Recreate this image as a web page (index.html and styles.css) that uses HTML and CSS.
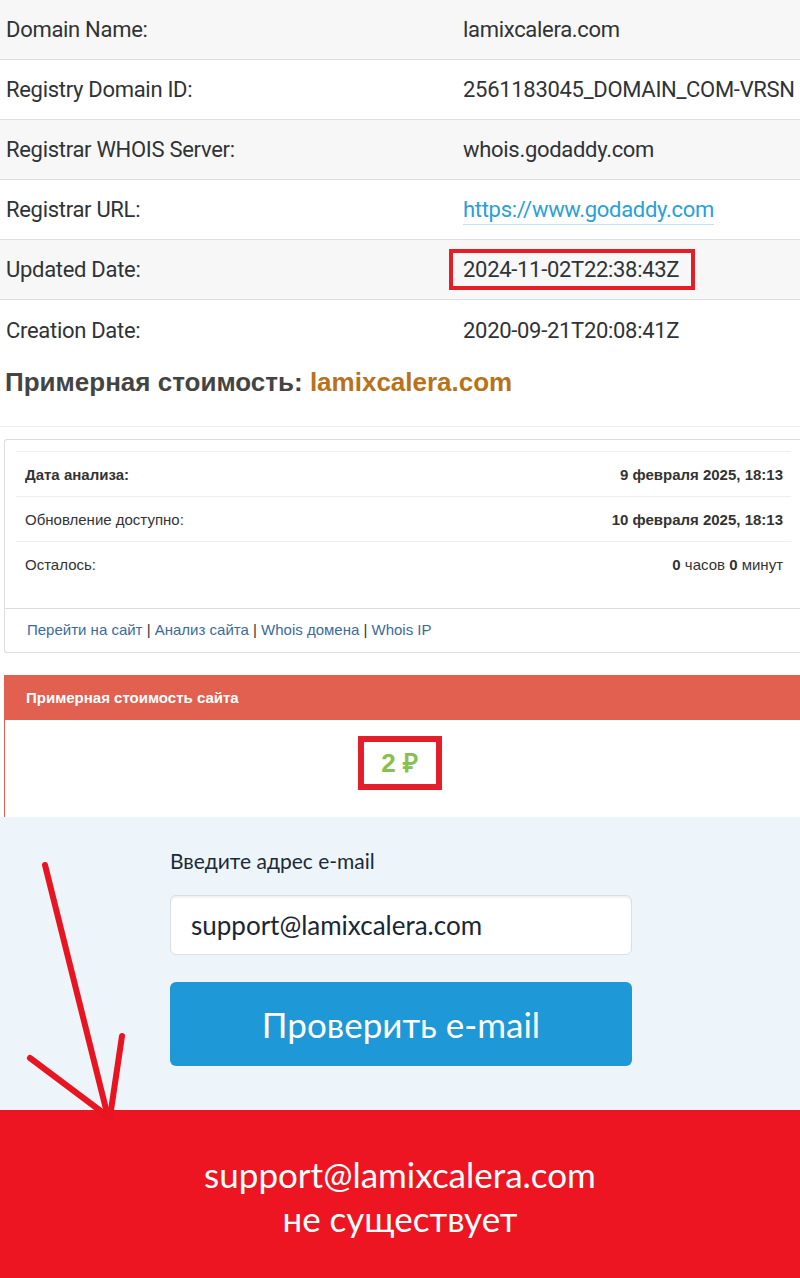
FILE: index.html
```html
<!DOCTYPE html>
<html lang="en">
<head>
    <meta charset="UTF-8">
    <meta name="viewport" content="width=device-width, initial-scale=1.0">
    <title>lamixcalera.com</title>
    <link rel="stylesheet" href="styles.css">
</head>
<body>
    <div id="whois">
        <div class="row"><span>Domain Name:</span><span>lamixcalera.com</span></div>
        <div class="row"><span>Registry Domain ID:</span><span>2561183045_DOMAIN_COM-VRSN</span></div>
        <div class="row"><span>Registrar WHOIS Server:</span><span>whois.godaddy.com</span></div>
        <div class="row"><span>Registrar URL:</span><span><a href="#">https://www.godaddy.com</a></span></div>
        <div class="row"><span>Updated Date:</span><span><span class="mark">2024-11-02T22:38:43Z</span></span></div>
        <div class="row last"><span>Creation Date:</span><span>2020-09-21T20:08:41Z</span></div>
    </div>

    <h2 class="price-title">Примерная стоимость: <span>lamixcalera.com</span></h2>

    <div class="panel">
        <table class="info">
            <tr><td><b>Дата анализа:</b></td><td><b>9 февраля 2025, 18:13</b></td></tr>
            <tr><td>Обновление доступно:</td><td><b>10 февраля 2025, 18:13</b></td></tr>
            <tr><td>Осталось:</td><td><b>0</b> часов <b>0</b> минут</td></tr>
        </table>
        <div class="links">
            <a href="#">Перейти на сайт</a> | <a href="#">Анализ сайта</a> | <a href="#">Whois домена</a> | <a href="#">Whois IP</a>
        </div>
    </div>

    <div class="cost">
        <div class="cost-head">Примерная стоимость сайта</div>
        <div class="cost-body"><span class="cost-value">2 ₽</span></div>
    </div>

    <div class="check">
        <div class="check-form">
            <label>Введите адрес e-mail</label>
            <div class="field">support@lamixcalera.com</div>
            <button>Проверить e-mail</button>
        </div>
        <svg class="arrow" width="140" height="310" viewBox="0 0 140 310">
            <g stroke="#e8141f" stroke-width="6" stroke-linecap="round" fill="none">
                <path d="M45 48 L108 300"/>
                <path d="M30 241 L106 298"/>
                <path d="M122 219 L110 300"/>
            </g>
        </svg>
    </div>

    <div class="result">
        support@lamixcalera.com<br>
        не существует
    </div>
</body>
</html>
```

FILE: styles.css
```css
body {
    margin: 0;
    padding: 0;
    background: #fff;
    font-family: Arial, "Liberation Sans", sans-serif;
}

#whois {
    font-family: Roboto, sans-serif;
    font-size: 22px;
    letter-spacing: -0.3px;
    color: #303336;
}

.row {
    display: grid;
    grid-template-columns: 457px 1fr;
    padding-left: 6px;
    height: 59px;
    align-items: center;
    white-space: nowrap;
    border-bottom: 1px solid #dedede;
}

.row:nth-child(odd) {
    background: #f7f7f7;
}

.row.last {
    border-bottom: none;
    height: 61px;
}

.row a {
    color: #2a9fd8;
    text-decoration: none;
    border-bottom: 1px solid #bfe1f3;
    padding-bottom: 2px;
}

.mark {
    display: inline-block;
    margin-left: -14px;
    padding: 0 12px 0 10px;
    line-height: 33px;
    border: 4px solid #e31e26;
}

.price-title {
    margin: 6px 0 0;
    padding: 0 5px 29px;
    font-size: 26px;
    line-height: 30px;
    color: #444;
    border-bottom: 1px solid #eee;
}

.price-title span {
    color: #b8721c;
}

.panel {
    margin: 12px 0 0 4px;
    border: 1px solid #ddd;
    border-right: none;
    border-radius: 3px 0 0 3px;
    font-size: 15px;
    color: #333;
}

.info {
    width: calc(100% - 20px);
    margin: 11px 0 22px 11px;
    border-collapse: collapse;
}

.info td {
    border-top: 1px solid #eee;
    padding: 0 8px 0 9px;
    height: 44px;
}

.info td:last-child {
    text-align: right;
}

.links {
    border-top: 1px solid #ddd;
    padding: 12px 22px 13px;
    line-height: 18px;
    color: #333;
}

.links a {
    color: #3a6b9c;
    text-decoration: none;
}

.cost {
    margin: 22px 0 0 4px;
}

.cost-head {
    background: #e1604f;
    color: #fff;
    font-weight: bold;
    font-size: 15px;
    height: 45px;
    line-height: 45px;
    padding-left: 22px;
}

.cost-body {
    border-left: 1px solid #e1604f;
    height: 97px;
    display: flex;
    justify-content: center;
    padding-top: 16px;
    box-sizing: border-box;
}

.cost-value {
    align-self: flex-start;
    border: 6px solid #e41e2a;
    width: 72px;
    height: 42px;
    line-height: 42px;
    text-align: center;
    color: #88c050;
    font-weight: bold;
    font-size: 26px;
    margin-right: 6px;
}

.check {
    position: relative;
    background: #eef5fa;
    height: 293px;
    font-family: Lato, sans-serif;
}

.check-form {
    display: flex;
    flex-direction: column;
    width: 462px;
    padding: 32px 0 0 170px;
}

.check-form label {
    font-size: 21px;
    color: #1b2a38;
    line-height: 24px;
}

.field {
    margin-top: 22px;
    height: 58px;
    line-height: 58px;
    background: #fff;
    border: 1px solid #d9dee3;
    border-radius: 6px;
    box-shadow: inset 0 2px 2px rgba(0, 0, 0, 0.06);
    padding-left: 20px;
    font-size: 26px;
    color: #1a2633;
}

.check-form button {
    margin-top: 27px;
    height: 84px;
    border: none;
    border-radius: 6px;
    background: #1e98d7;
    color: #fff;
    font-family: Lato, sans-serif;
    font-size: 35px;
}

.arrow {
    position: absolute;
    left: 0;
    top: 0;
    z-index: 2;
}

.result {
    background: #ee1522;
    height: 168px;
    box-sizing: border-box;
    padding-top: 42px;
    text-align: center;
    color: #fff;
    font-family: Lato, sans-serif;
    font-size: 35px;
    line-height: 44px;
}
```
